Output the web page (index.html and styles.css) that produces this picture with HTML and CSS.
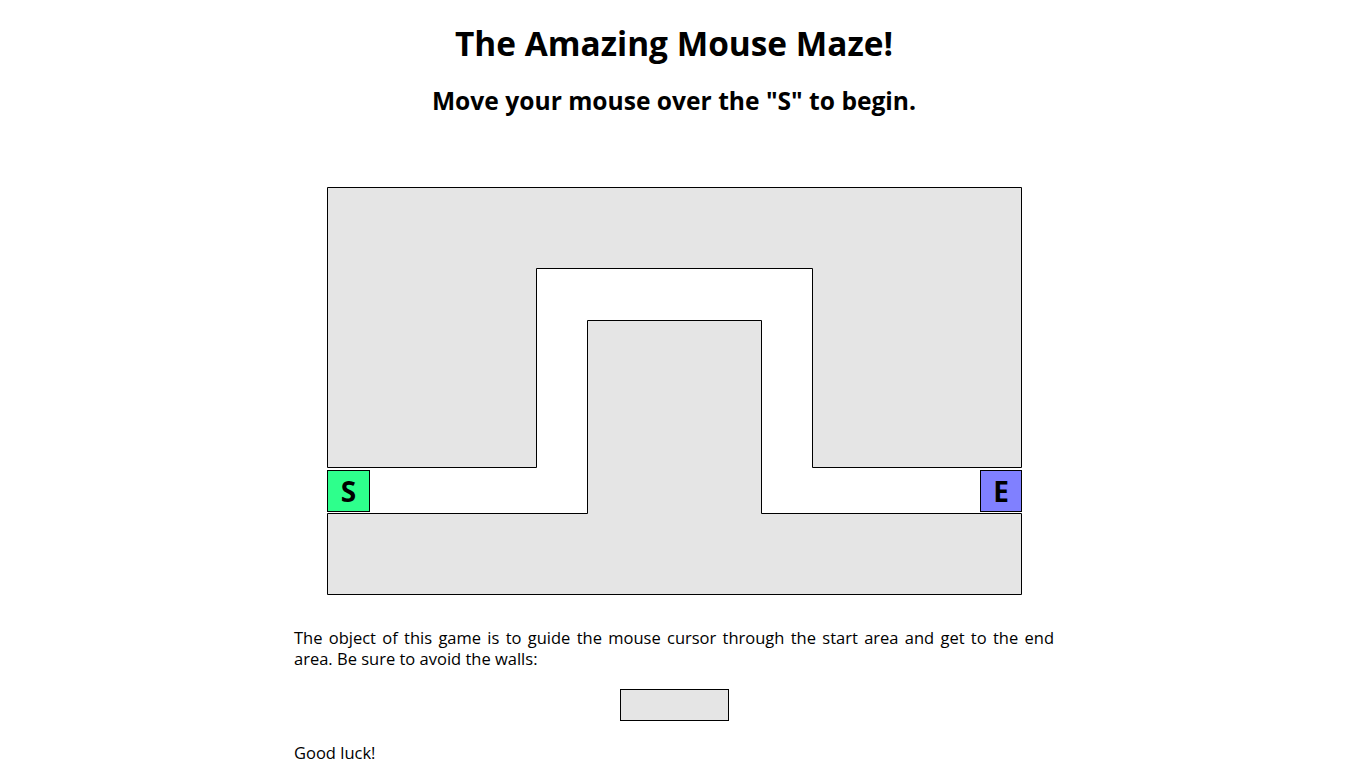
FILE: index.html
```html
<!DOCTYPE html>
<html lang="en">
<head>
<meta charset="utf-8">
<title>The Amazing Mouse Maze!</title>
<link rel="stylesheet" href="styles.css">
</head>
<body>
<div class="page">
  <h1 class="title">The Amazing Mouse Maze!</h1>
  <h2 class="subtitle">Move your mouse over the "S" to begin.</h2>
  <div class="maze">
    <svg class="walls" width="695" height="408" viewBox="0 0 695 408">
      <polygon points="0.5,0.5 694.5,0.5 694.5,280.5 485.5,280.5 485.5,81.5 209.5,81.5 209.5,280.5 0.5,280.5" />
      <polygon points="0.5,326.5 260.5,326.5 260.5,133.5 434.5,133.5 434.5,326.5 694.5,326.5 694.5,407.5 0.5,407.5" />
    </svg>
    <div class="cell start">S</div>
    <div class="cell end">E</div>
  </div>
  <p class="intro">The object of this game is to guide the mouse cursor through the start area and get to the end area. Be sure to avoid the walls:</p>
  <div class="sample-wall"></div>
  <p class="luck">Good luck!</p>
</div>
</body>
</html>
```

FILE: styles.css
```css
html, body {
  margin: 0;
  padding: 0;
  background: #ffffff;
  color: #000000;
}

body {
  font-family: "Open Sans", "Noto Sans", "Liberation Sans", sans-serif;
}

.page {
  width: 760px;
  margin: 0 auto;
}

.title {
  margin: 21px 0 0;
  font-size: 33.4px;
  line-height: 44px;
  font-weight: 700;
  text-align: center;
}

.subtitle {
  margin: 20px 0 0;
  font-size: 24.6px;
  line-height: 31px;
  font-weight: 700;
  text-align: center;
}

.maze {
  position: relative;
  width: 695px;
  height: 408px;
  margin: 71px 0 0 33px;
}

.walls {
  display: block;
}

.walls polygon {
  fill: #e5e5e5;
  stroke: #000000;
  stroke-width: 1;
}

.cell {
  position: absolute;
  top: 283px;
  box-sizing: border-box;
  height: 42px;
  border: 1px solid #000000;
  display: flex;
  align-items: center;
  justify-content: center;
  font-size: 28px;
  font-weight: 700;
  line-height: 1;
}

.start {
  left: 0;
  width: 43px;
  background: #2eff8c;
}

.end {
  left: 653px;
  width: 42px;
  background: #8080ff;
}

.intro {
  margin: 32px 0 0;
  font-size: 16.5px;
  line-height: 21px;
  text-align: justify;
}

.sample-wall {
  width: 107px;
  height: 30px;
  margin: 20px auto 0;
  background: #e5e5e5;
  border: 1px solid #000000;
}

.luck {
  margin: 21px 0 0;
  font-size: 16.5px;
  line-height: 21px;
}
```
